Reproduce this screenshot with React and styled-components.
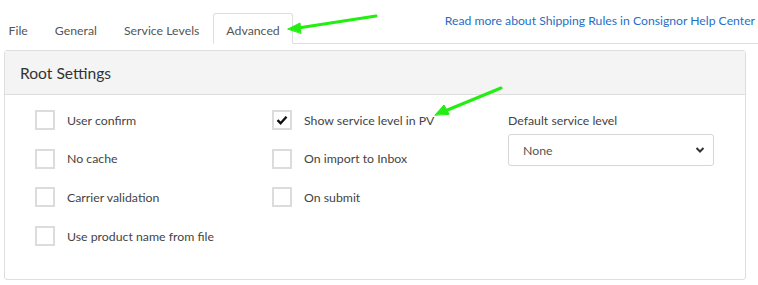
import styled, { createGlobalStyle } from "styled-components";

const GlobalStyle = createGlobalStyle`
  body {
    margin: 0;
    background: #fff;
    font-family: Lato, "Open Sans", sans-serif;
    color: #444;
  }
`;

const Page = styled.div`
  position: relative;
  width: 758px;
  height: 285px;
  overflow: hidden;
`;

const TopBar = styled.div`
  display: flex;
  align-items: flex-end;
  justify-content: space-between;
  height: 43px;
  border-bottom: 1px solid #dedede;
`;

const Tabs = styled.ul`
  display: flex;
  list-style: none;
  margin: 0 0 -1px -5px;
  padding: 0;
`;

const Tab = styled.li`
  height: 31px;
  display: flex;
  align-items: center;
  padding: 3px 12.5px 0;
  box-sizing: border-box;
  font-size: 12.3px;
  color: #555;
  border: 1px solid ${(p) => (p.$active ? "#dedede" : "transparent")};
  border-bottom-color: ${(p) => (p.$active ? "#fff" : "transparent")};
  border-radius: 3px 3px 0 0;
  background: #fff;
`;

const HelpLink = styled.a`
  align-self: flex-start;
  margin: 13px 3px 0 0;
  font-size: 12.2px;
  color: #1f6fc5;
  text-decoration: none;
`;

const Panel = styled.section`
  margin: 6px 12px 0 4px;
  height: 230px;
  box-sizing: border-box;
  border: 1px solid #dedede;
  border-radius: 3px;
`;

const PanelHeader = styled.header`
  height: 43px;
  display: flex;
  align-items: center;
  padding-left: 15px;
  background: #f4f4f4;
  border-bottom: 1px solid #dedede;
  font-size: 15.6px;
  color: #333;
`;

const PanelBody = styled.div`
  display: grid;
  grid-template-columns: 237px 236px 206px;
  padding: 15px 0 0 30px;
`;

const Column = styled.div`
  display: flex;
  flex-direction: column;
  gap: 18.7px;
`;

const CheckRow = styled.label`
  display: flex;
  align-items: center;
  height: 20px;
  font-size: 12.3px;
  color: #444;
`;

const Box = styled.span`
  width: 20px;
  height: 20px;
  box-sizing: border-box;
  border: 2px solid #dcdcdc;
  margin-right: 12px;
  display: flex;
  align-items: center;
  justify-content: center;
  flex-shrink: 0;
`;

const FieldLabel = styled.div`
  font-size: 12.3px;
  color: #444;
  height: 20px;
  display: flex;
  align-items: center;
  margin-bottom: 4px;
`;

const Select = styled.div`
  height: 32px;
  box-sizing: border-box;
  border: 1px solid #d6d6d6;
  border-radius: 3px;
  display: flex;
  align-items: center;
  justify-content: space-between;
  padding: 0 8px 0 14px;
  font-size: 12.3px;
  color: #555;
`;

const Arrows = styled.svg`
  position: absolute;
  left: 0;
  top: 0;
  pointer-events: none;
`;

const Check = ({ checked, children }) => (
  <CheckRow>
    <Box>
      {checked && (
        <svg width="12" height="10" viewBox="0 0 12 10">
          <path d="M1.5 5.2 L4.6 8.2 L10.5 1.8" fill="none" stroke="#111" strokeWidth="2.4" />
        </svg>
      )}
    </Box>
    {children}
  </CheckRow>
);

const Chevron = () => (
  <svg width="10" height="8" viewBox="0 0 10 8">
    <path d="M1.5 2 L5 5.5 L8.5 2" fill="none" stroke="#333" strokeWidth="2" />
  </svg>
);

export default function App() {
  return (
    <Page>
      <GlobalStyle />
      <TopBar>
        <Tabs>
          <Tab>File</Tab>
          <Tab>General</Tab>
          <Tab>Service Levels</Tab>
          <Tab $active>Advanced</Tab>
        </Tabs>
        <HelpLink href="#">Read more about Shipping Rules in Consignor Help Center</HelpLink>
      </TopBar>
      <Panel>
        <PanelHeader>Root Settings</PanelHeader>
        <PanelBody>
          <Column>
            <Check>User confirm</Check>
            <Check>No cache</Check>
            <Check>Carrier validation</Check>
            <Check>Use product name from file</Check>
          </Column>
          <Column>
            <Check checked>Show service level in PV</Check>
            <Check>On import to Inbox</Check>
            <Check>On submit</Check>
          </Column>
          <div>
            <FieldLabel>Default service level</FieldLabel>
            <Select>
              None
              <Chevron />
            </Select>
          </div>
        </PanelBody>
      </Panel>
      <Arrows width="758" height="285">
        <g fill="#22ee11" stroke="#22ee11" strokeWidth="3" strokeLinecap="round">
          <line x1="376" y1="16" x2="298" y2="28" />
          <polygon points="288,29 300,23 301,33" strokeWidth="1" />
          <line x1="501" y1="88" x2="445" y2="111" />
          <polygon points="435,115 444,105 449,114" strokeWidth="1" />
        </g>
      </Arrows>
    </Page>
  );
}
